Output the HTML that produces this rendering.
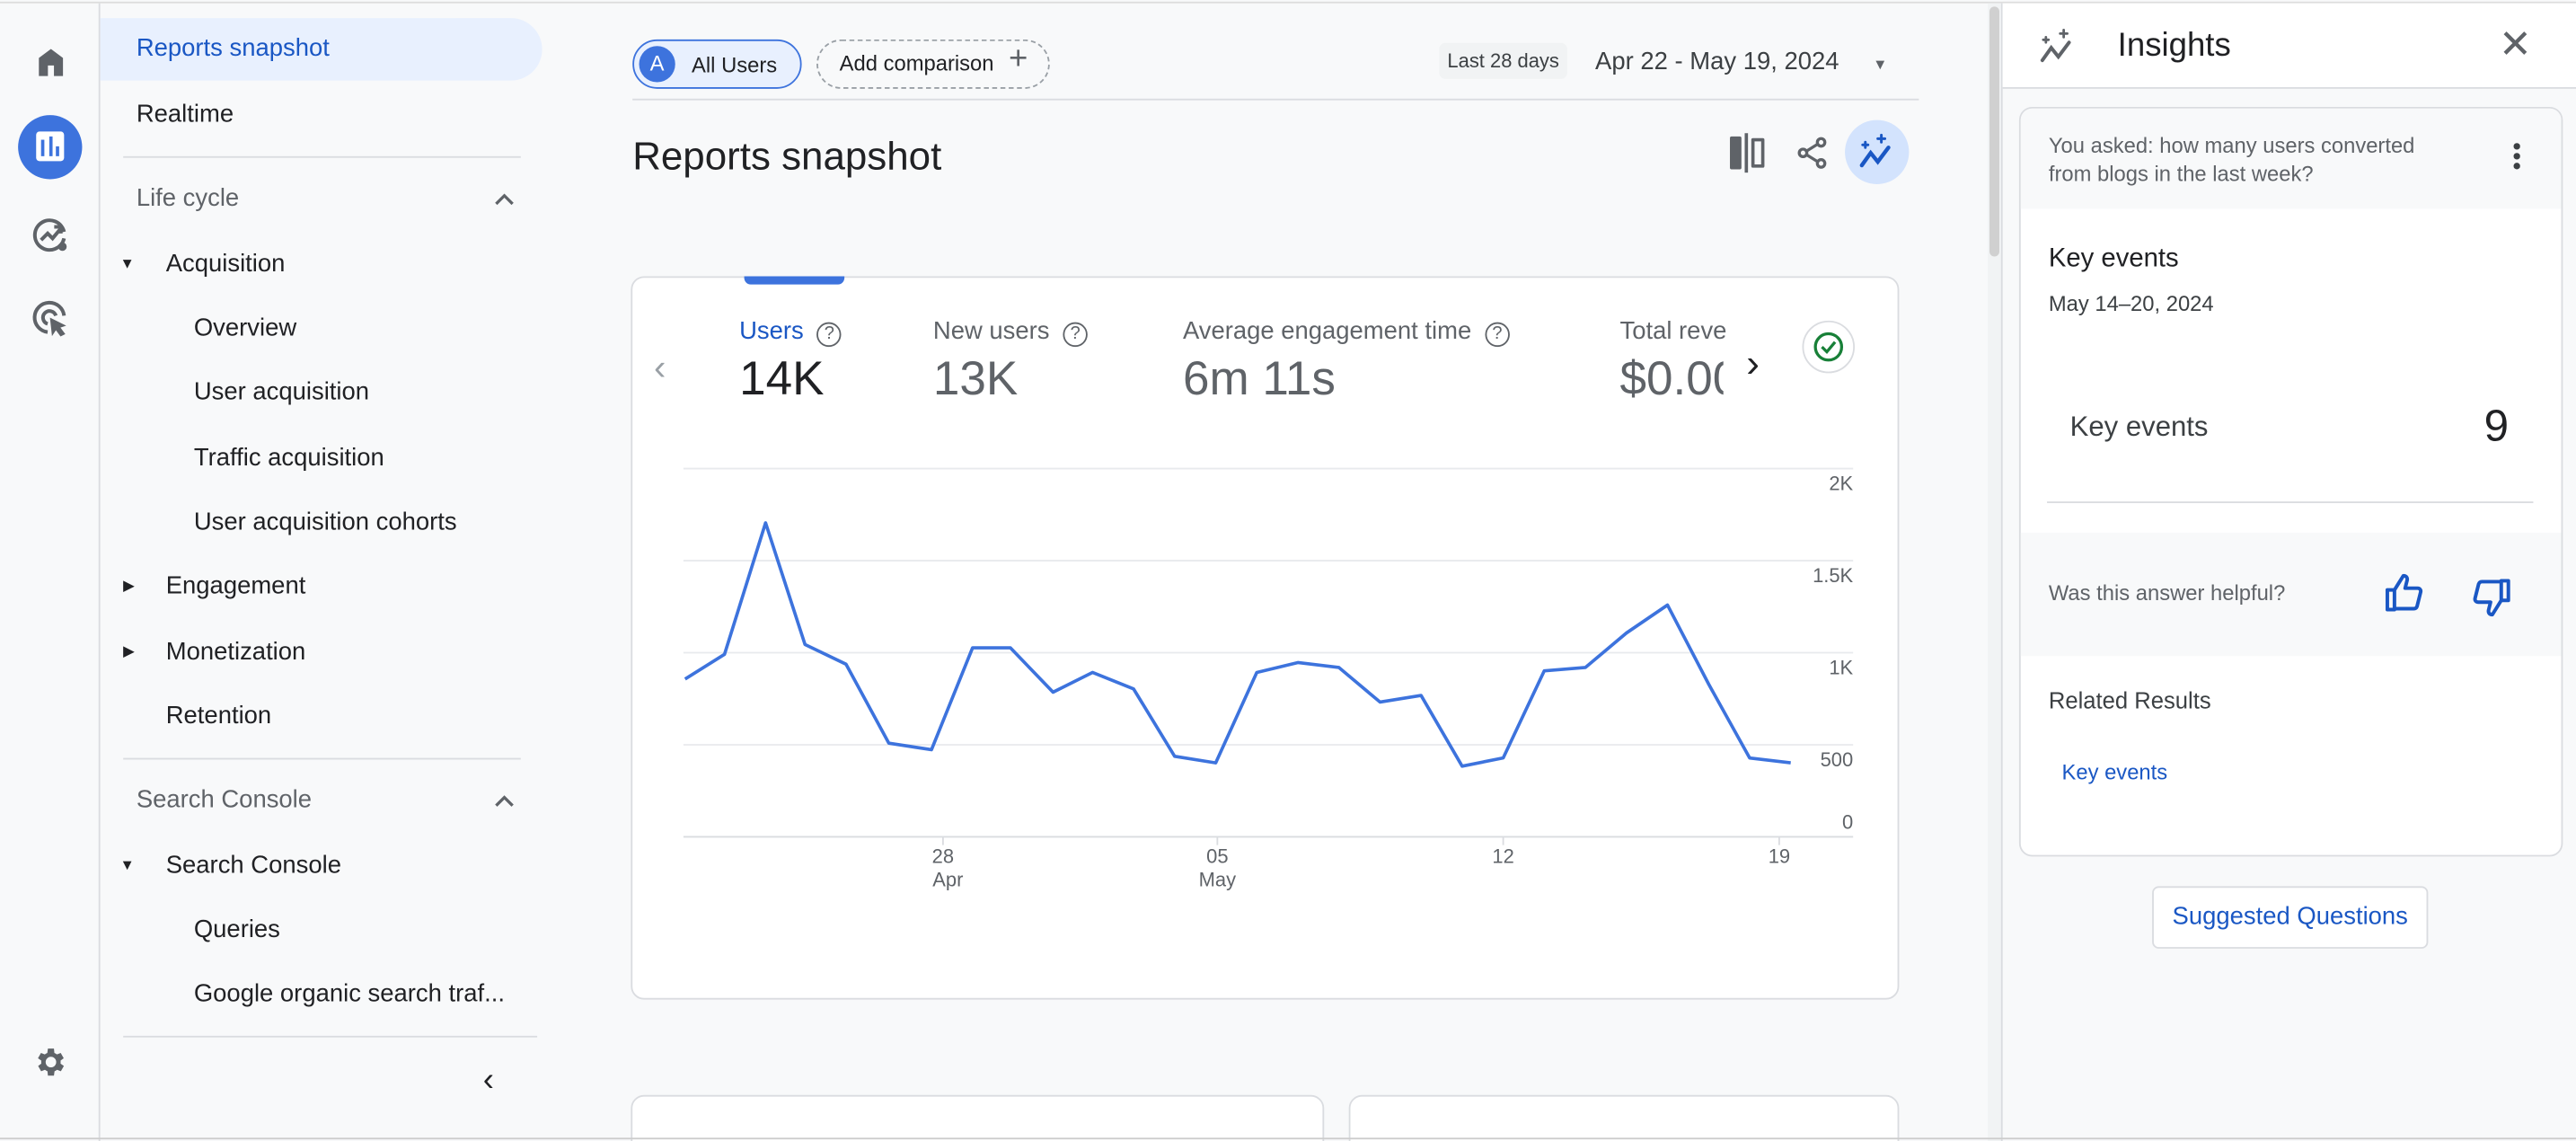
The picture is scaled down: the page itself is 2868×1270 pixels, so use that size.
<!DOCTYPE html>
<html><head><meta charset="utf-8"><style>
*{box-sizing:border-box;margin:0;padding:0}
html,body{width:2868px;height:1270px;overflow:hidden;background:#f8f9fa;font-family:"Liberation Sans",Arial,sans-serif}
#s{position:absolute;left:0;top:0;width:1568px;height:694px;transform:scale(1.82908,1.83);transform-origin:0 0;background:#f8f9fa;color:#202124;overflow:hidden}
.a{position:absolute}
.nav{font-size:15px;color:#202124}
.sec{font-size:15px;color:#5f6368}
.hr{position:absolute;height:1px;background:#dadce0}
</style></head><body><div id="s">
<div class="hr" style="left:0;top:1px;width:1568px;background:#ddd"></div>
<div class="a" style="left:60px;top:2px;width:1px;height:692px;background:#dadce0"></div>
<svg class="a" style="left:20px;top:27px" width="22" height="22" viewBox="0 0 24 24"><path d="M4 21V9l8-6 8 6v12h-6v-7h-4v7z" fill="#5f6368"/></svg>
<div class="a" style="left:11px;top:70px;width:39px;height:39px;border-radius:50%;background:#3d73dd"></div>
<div class="a" style="left:22px;top:80px;width:17px;height:18px;border-radius:2px;background:#fff"></div>
<div class="a" style="left:25px;top:85px;width:2px;height:10px;background:#3d73dd"></div>
<div class="a" style="left:29.5px;top:83px;width:2px;height:12px;background:#3d73dd"></div>
<div class="a" style="left:34px;top:89px;width:2px;height:6px;background:#3d73dd"></div>
<svg class="a" style="left:19px;top:131px" width="24" height="24" viewBox="0 0 24 24" fill="none" stroke="#5f6368" stroke-width="2.2"><path d="M20 14A9 9 0 1 1 20 10"/><path d="M6 15l4-4 3 3 5-6M14 7h4v4"/><circle cx="19" cy="19" r="1.5" fill="#5f6368"/></svg>
<svg class="a" style="left:19px;top:182px" width="24" height="24" viewBox="0 0 24 24" fill="none" stroke="#5f6368" stroke-width="2.2"><path d="M10 20A9 9 0 1 1 20 10"/><path d="M10 15A4 4 0 1 1 15 10"/><path d="M12 12l8 4-3 1 3 4-2 1-3-4-2 3z" fill="#5f6368" stroke-width="1"/></svg>
<svg class="a" style="left:20px;top:635px" width="22" height="22" viewBox="0 0 24 24"><path fill="#5f6368" d="M19.4 13a7.5 7.5 0 0 0 0-2l2.1-1.6-2-3.5-2.5 1a7 7 0 0 0-1.7-1L15 3h-4l-.4 2.9a7 7 0 0 0-1.7 1l-2.5-1-2 3.5L6.6 11a7.5 7.5 0 0 0 0 2l-2.1 1.6 2 3.5 2.5-1c.5.4 1.1.7 1.7 1L11 21h4l.4-2.9c.6-.3 1.2-.6 1.7-1l2.5 1 2-3.5zM13 15.5a3.5 3.5 0 1 1 0-7 3.5 3.5 0 0 1 0 7z" transform="translate(-1 0)"/></svg>
<div class="a" style="left:61px;top:11px;width:269px;height:38px;border-radius:0 19px 19px 0;background:#e8f0fe"></div>
<div class="a nav" style="left:83px;top:21px;color:#1a57c4">Reports snapshot</div>
<div class="a nav" style="left:83px;top:61px">Realtime</div>
<div class="hr" style="left:75px;top:95px;width:242px"></div>
<div class="a sec" style="left:83px;top:112px">Life cycle</div>
<svg class="a" style="left:301px;top:116px" width="12" height="10" viewBox="0 0 12 10" fill="none" stroke="#5f6368" stroke-width="1.8"><path d="M1 8l5-5 5 5"/></svg>
<div class="a" style="left:73px;top:155px;font-size:9px;color:#202124">▼</div>
<div class="a nav" style="left:101px;top:152px">Acquisition</div>
<div class="a nav" style="left:118px;top:191px">Overview</div>
<div class="a nav" style="left:118px;top:230px">User acquisition</div>
<div class="a nav" style="left:118px;top:270px">Traffic acquisition</div>
<div class="a nav" style="left:118px;top:309px">User acquisition cohorts</div>
<div class="a" style="left:75px;top:351px;font-size:9px">▶</div>
<div class="a nav" style="left:101px;top:348px">Engagement</div>
<div class="a" style="left:75px;top:391px;font-size:9px">▶</div>
<div class="a nav" style="left:101px;top:388px">Monetization</div>
<div class="a nav" style="left:101px;top:427px">Retention</div>
<div class="hr" style="left:75px;top:461px;width:242px"></div>
<div class="a sec" style="left:83px;top:478px">Search Console</div>
<svg class="a" style="left:301px;top:482px" width="12" height="10" viewBox="0 0 12 10" fill="none" stroke="#5f6368" stroke-width="1.8"><path d="M1 8l5-5 5 5"/></svg>
<div class="a" style="left:73px;top:521px;font-size:9px">▼</div>
<div class="a nav" style="left:101px;top:518px">Search Console</div>
<div class="a nav" style="left:118px;top:557px">Queries</div>
<div class="a nav" style="left:118px;top:596px">Google organic search traf...</div>
<div class="hr" style="left:75px;top:630px;width:252px"></div>
<div class="a" style="left:294px;top:646px;font-size:20px;color:#202124">‹</div>
<div class="a" style="left:385px;top:24px;width:103px;height:30px;border:1px solid #3d73dd;border-radius:15px;background:#e8f0fe"></div>
<div class="a" style="left:389px;top:28px;width:22px;height:22px;border-radius:50%;background:#3d73dd;color:#fff;font-size:13px;text-align:center;line-height:22px">A</div>
<div class="a" style="left:421px;top:32px;font-size:13px">All Users</div>
<div class="a" style="left:497px;top:24px;width:142px;height:30px;border:1px dashed #9aa0a6;border-radius:15px"></div>
<div class="a" style="left:511px;top:31px;font-size:13px">Add comparison</div>
<div class="a" style="left:614px;top:25px;font-size:20px;color:#5f6368;font-weight:300">+</div>
<div class="a" style="left:876px;top:26px;height:22px;padding:4px 5px;background:#f1f3f4;border-radius:4px;font-size:12px;color:#3c4043">Last 28 days</div>
<div class="a" style="left:971px;top:29px;font-size:15px;color:#3c4043">Apr 22 - May 19, 2024</div>
<div class="a" style="left:1140px;top:34px;font-size:9px;color:#5f6368">▼</div>
<div class="hr" style="left:385px;top:60px;width:783px"></div>
<div class="a" style="left:385px;top:82px;font-size:24px;color:#202124">Reports snapshot</div>
<div class="a" style="left:1053px;top:83px;width:7px;height:20px;background:#5f6368;border-radius:1px"></div>
<div class="a" style="left:1062px;top:81px;width:1.5px;height:24px;background:#5f6368"></div>
<div class="a" style="left:1066px;top:84px;width:8px;height:18px;border:2px solid #5f6368;border-radius:1px"></div>
<svg class="a" style="left:1092px;top:82px" width="22" height="22" viewBox="0 0 24 24" fill="none" stroke="#5f6368" stroke-width="2"><circle cx="18" cy="5" r="2.5"/><circle cx="6" cy="12" r="2.5"/><circle cx="18" cy="19" r="2.5"/><path d="M8 11l8-5M8 13l8 5"/></svg>
<div class="a" style="left:1123px;top:73px;width:39px;height:39px;border-radius:50%;background:#d3e3fd"></div>
<svg class="a" style="left:1130px;top:80px" width="26" height="26" viewBox="0 0 24 24" fill="none" stroke="#1a57c4" stroke-width="2.2" stroke-linecap="round"><path d="M3 19l5-7 4 5 6-8"/><path d="M14 2v4M12 4h4M5 6v3M3.5 7.5h3" stroke-width="1.5"/></svg>
<div class="a" style="left:384px;top:168px;width:772px;height:440px;background:#fff;border:1px solid #dadce0;border-radius:8px"></div>
<div class="a" style="left:453px;top:168px;width:61px;height:5px;background:#3d73dd;border-radius:0 0 4px 4px"></div>
<div class="a" style="left:398px;top:211px;font-size:22px;color:#9aa0a6">‹</div>
<div class="a" style="left:450px;top:193px;font-size:15px;color:#1a57c4">Users <span style="color:#5f6368;border:1.5px solid #5f6368;border-radius:50%;font-size:11px;display:inline-block;width:15px;height:15px;text-align:center;line-height:13px;margin-left:4px">?</span></div>
<div class="a" style="left:450px;top:215px;font-size:29px;color:#202124">14K</div>
<div class="a" style="left:568px;top:193px;font-size:15px;color:#5f6368">New users <span style="border:1.5px solid #5f6368;border-radius:50%;font-size:11px;display:inline-block;width:15px;height:15px;text-align:center;line-height:13px;margin-left:4px">?</span></div>
<div class="a" style="left:568px;top:215px;font-size:29px;color:#5f6368">13K</div>
<div class="a" style="left:720px;top:193px;font-size:15px;color:#5f6368">Average engagement time <span style="border:1.5px solid #5f6368;border-radius:50%;font-size:11px;display:inline-block;width:15px;height:15px;text-align:center;line-height:13px;margin-left:4px">?</span></div>
<div class="a" style="left:720px;top:215px;font-size:29px;color:#5f6368">6m 11s</div>
<div class="a" style="left:986px;top:193px;width:65px;overflow:hidden;white-space:nowrap;font-size:15px;color:#5f6368">Total revenue</div>
<div class="a" style="left:986px;top:215px;width:63px;overflow:hidden;white-space:nowrap;font-size:29px;color:#5f6368">$0.00</div>
<div class="a" style="left:1063px;top:208px;font-size:24px;color:#202124">›</div>
<div class="a" style="left:1097px;top:195px;width:32px;height:32px;border-radius:50%;border:1px solid #dadce0;background:#fff"></div>
<svg class="a" style="left:1103px;top:201px" width="20" height="20" viewBox="0 0 20 20" fill="none" stroke="#188038" stroke-width="1.8"><circle cx="10" cy="10" r="8"/><path d="M6 10l3 3 5-6"/></svg>
<svg class="a" style="left:0;top:0" width="1568" height="694">
<g stroke="#e8eaed" stroke-width="1"><line x1="416" y1="285" x2="1128" y2="285"/><line x1="416" y1="341" x2="1128" y2="341"/><line x1="416" y1="397" x2="1128" y2="397"/><line x1="416" y1="453" x2="1128" y2="453"/></g>
<line x1="416" y1="509" x2="1128" y2="509" stroke="#dadce0"/>
<g stroke="#dadce0"><line x1="574" y1="509" x2="574" y2="514"/><line x1="741" y1="509" x2="741" y2="514"/><line x1="915" y1="509" x2="915" y2="514"/><line x1="1083" y1="509" x2="1083" y2="514"/></g>
<polyline fill="none" stroke="#3d73dd" stroke-width="2" stroke-linejoin="round" points="417,413 441,398 466,318 490,392 515,404 541,452 567,456 592,394 615,394 641,421 665,409 690,419 715,460 740,464 765,409 790,403 815,406 840,427 865,423 890,466 915,461 940,408 965,406 990,385 1015,368 1040,416 1065,461 1090,464"/>
<g font-size="12" fill="#5f6368" font-family="Liberation Sans,sans-serif" text-anchor="end"><text x="1128" y="298">2K</text><text x="1128" y="354">1.5K</text><text x="1128" y="410">1K</text><text x="1128" y="466">500</text><text x="1128" y="504">0</text></g>
<g font-size="12" fill="#5f6368" font-family="Liberation Sans,sans-serif" text-anchor="middle"><text x="574" y="525">28</text><text x="577" y="539">Apr</text><text x="741" y="525">05</text><text x="741" y="539">May</text><text x="915" y="525">12</text><text x="1083" y="525">19</text></g>
</svg>
<div class="a" style="left:384px;top:666px;width:422px;height:40px;background:#fff;border:1px solid #dadce0;border-radius:8px"></div>
<div class="a" style="left:821px;top:666px;width:335px;height:40px;background:#fff;border:1px solid #dadce0;border-radius:8px"></div>
<div class="a" style="left:1210px;top:2px;width:8px;height:692px;background:#f1f3f4"></div>
<div class="a" style="left:1211px;top:4px;width:6px;height:152px;background:#d0d0d0;border-radius:3px"></div>
<div class="a" style="left:1218px;top:2px;width:350px;height:692px;background:#f8f9fa;border-left:1px solid #dadce0"></div>
<div class="a" style="left:1219px;top:2px;width:349px;height:52px;background:#fff;border-bottom:1px solid #dadce0"></div>
<svg class="a" style="left:1241px;top:17px" width="26" height="22" viewBox="0 0 24 20" fill="none" stroke="#5f6368" stroke-width="2" stroke-linecap="round"><path d="M2 18l5-7 4 5 6-8"/><path d="M14 1v4M12 3h4M4 5v3M2.5 6.5h3" stroke-width="1.4"/></svg>
<div class="a" style="left:1289px;top:17px;font-size:20px;color:#202124">Insights</div>
<div class="a" style="left:1521px;top:13px;font-size:24px;color:#5f6368">✕</div>
<div class="a" style="left:1229px;top:65px;width:331px;height:456px;background:#fff;border:1px solid #dadce0;border-radius:8px;overflow:hidden">
<div style="position:absolute;left:0;top:0;width:100%;height:61px;background:#f8f9fa"></div>
<div style="position:absolute;left:0;top:258px;width:100%;height:75px;background:#f8f9fa"></div>
</div>
<div class="a" style="left:1247px;top:80px;font-size:13px;line-height:17px;color:#5f6368">You asked: how many users converted<br>from blogs in the last week?</div>
<div class="a" style="left:1530px;top:87px;width:4px;height:4px;border-radius:50%;background:#3c4043;box-shadow:0 6px 0 #3c4043,0 12px 0 #3c4043"></div>
<div class="a" style="left:1247px;top:149px;font-size:16px;color:#202124">Key events</div>
<div class="a" style="left:1247px;top:177px;font-size:13px;color:#3c4043">May 14–20, 2024</div>
<div class="a" style="left:1260px;top:250px;font-size:17px;color:#3c4043">Key events</div>
<div class="a" style="left:1512px;top:244px;font-size:27px;color:#202124">9</div>
<div class="hr" style="left:1246px;top:305px;width:296px"></div>
<div class="a" style="left:1247px;top:353px;font-size:13px;color:#5f6368">Was this answer helpful?</div>
<svg class="a" style="left:1451px;top:348px" width="26" height="26" viewBox="0 0 24 24" fill="none" stroke="#1a57c4" stroke-width="2" stroke-linejoin="round"><path d="M2 10h4v11H2zM6 10l5-8c2 0 2.5 1.5 2 3l-1 4h7c1.2 0 2 1 1.7 2.2l-2 8c-.3.8-1 1.3-1.8 1.3H6"/></svg>
<svg class="a" style="left:1503px;top:350px" width="26" height="26" viewBox="0 0 24 24" fill="none" stroke="#1a57c4" stroke-width="2" stroke-linejoin="round"><path d="M22 14h-4V3h4zM18 14l-5 8c-2 0-2.5-1.5-2-3l1-4H5c-1.2 0-2-1-1.7-2.2l2-8C5.6 4 6.3 3.5 7.1 3.5H18"/></svg>
<div class="a" style="left:1247px;top:418px;font-size:14px;color:#3c4043">Related Results</div>
<div class="a" style="left:1255px;top:462px;font-size:13px;color:#1a57c4">Key events</div>
<div class="a" style="left:1310px;top:539px;width:168px;height:38px;border:1px solid #dadce0;border-radius:4px;background:#fff;text-align:center;line-height:36px;font-size:15px;color:#1a57c4">Suggested Questions</div>
<div class="hr" style="left:0;top:692px;width:1568px;background:#ccc"></div>
</div></body></html>
